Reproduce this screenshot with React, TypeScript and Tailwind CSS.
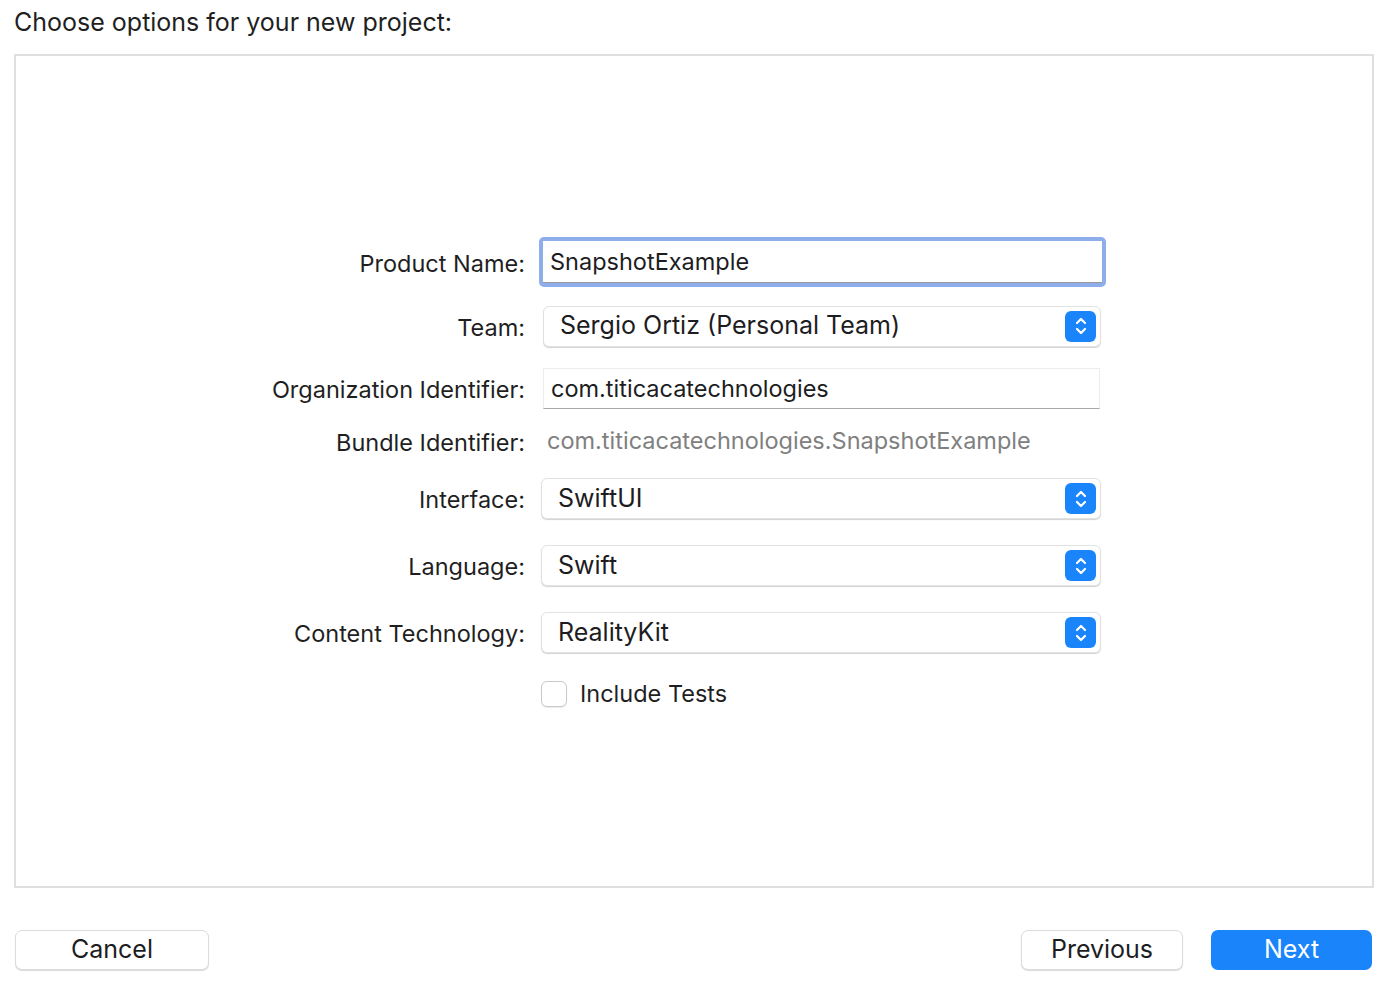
import React from 'react';

const font = { fontFamily: 'Inter, "Noto Sans", sans-serif' };

const Stepper = () => (
  <div className="w-[31px] h-[31px] rounded-[6px] bg-[#1a84fb] flex items-center justify-center">
    <svg width="14" height="22" viewBox="0 0 14 22" fill="none" stroke="white" strokeWidth="2.2" strokeLinecap="round" strokeLinejoin="round">
      <path d="M3 8l4-4 4 4" />
      <path d="M3 14l4 4 4-4" />
    </svg>
  </div>
);

const Label = ({ children }: { children: React.ReactNode }) => (
  <div className="w-[509px] text-right text-[23.5px] text-[#1f1f1f] pt-[3px]">{children}</div>
);

const Popup = ({ value, left = 'ml-[20px]', width = 'w-[558px]' }: { value: string, left?: string, width?: string }) => (
  <div className={`${left} ${width} h-[41px] bg-white rounded-[6px] border border-[#e2e2e2] shadow-[0_1px_1px_rgba(0,0,0,0.18)] flex items-center justify-between pl-[16px] pr-[4px]`}>
    <span className="text-[25px] text-[#1d1d1f]">{value}</span>
    <Stepper />
  </div>
);

export default function App() {
  return (
    <div className="w-[1400px] h-[986px] bg-white text-[#1d1d1f]" style={font}>
      <div className="px-[14px] w-[1388px]">
        <div className="h-[54px] pt-[4px] text-[25px] text-[#1f1f1f]">Choose options for your new project:</div>

        <div className="h-[834px] border-2 border-[#dfdfdf] bg-white flex flex-col pt-[181px]">
          {/* Product Name */}
          <div className="flex items-center h-[50px]">
            <Label>Product Name:</Label>
            <div className="ml-[14px] w-[567px] h-[50px] rounded-[5px] bg-[#8daeeb] p-[4px]">
              <div className="w-full h-full bg-white border-b border-[#9a9a9a] flex items-center pl-[7px] text-[23.5px] text-[#1d1d1f]">
                SnapshotExample
              </div>
            </div>
          </div>

          {/* Team */}
          <div className="flex items-center h-[42px] mt-[18px]">
            <Label>Team:</Label>
            <Popup value="Sergio Ortiz (Personal Team)" left="ml-[18px]" />
          </div>

          {/* Organization Identifier */}
          <div className="flex items-center h-[41px] mt-[21px]">
            <Label>Organization Identifier:</Label>
            <div className="ml-[18px] w-[557px] h-[41px] bg-white border border-[#ececec] border-b-[#a9a9a9] flex items-center pl-[7px] text-[23.5px] text-[#1d1d1f]">
              com.titicacatechnologies
            </div>
          </div>

          {/* Bundle Identifier */}
          <div className="flex items-center h-[30px] mt-[17px]">
            <Label>Bundle Identifier:</Label>
            <div className="ml-[22px] text-[23.5px] text-[#808080]">com.titicacatechnologies.SnapshotExample</div>
          </div>

          {/* Interface */}
          <div className="flex items-center h-[41px] mt-[22px]">
            <Label>Interface:</Label>
            <Popup value="SwiftUI" left="ml-[16px]" width="w-[560px]" />
          </div>

          {/* Language */}
          <div className="flex items-center h-[41px] mt-[26px]">
            <Label>Language:</Label>
            <Popup value="Swift" left="ml-[16px]" width="w-[560px]" />
          </div>

          {/* Content Technology */}
          <div className="flex items-center h-[41px] mt-[26px]">
            <Label>Content Technology:</Label>
            <Popup value="RealityKit" left="ml-[16px]" width="w-[560px]" />
          </div>

          {/* Include Tests */}
          <div className="flex items-center h-[26px] mt-[28px]">
            <div className="w-[509px]" />
            <div className="ml-[16px] w-[26px] h-[26px] rounded-[6px] border border-[#c9c9c9] bg-white shadow-[0_1px_1px_rgba(0,0,0,0.08)]" />
            <span className="ml-[13px] text-[23.5px] text-[#1f1f1f]">Include Tests</span>
          </div>
        </div>

        <div className="flex items-center justify-between mt-[42px]">
          <button className="ml-[1px] w-[194px] h-[40px] rounded-[7px] bg-white border border-[#dcdcdc] shadow-[0_1px_1px_rgba(0,0,0,0.15)] text-[25px] text-[#1d1d1f]">
            Cancel
          </button>
          <div className="flex items-center gap-[28px] mr-[2px]">
            <button className="w-[162px] h-[40px] rounded-[7px] bg-white border border-[#dcdcdc] shadow-[0_1px_1px_rgba(0,0,0,0.15)] text-[25px] text-[#1d1d1f]">
              Previous
            </button>
            <button className="w-[161px] h-[40px] rounded-[7px] bg-[#1a84fb] text-[25px] text-white">
              Next
            </button>
          </div>
        </div>
      </div>
    </div>
  );
}
